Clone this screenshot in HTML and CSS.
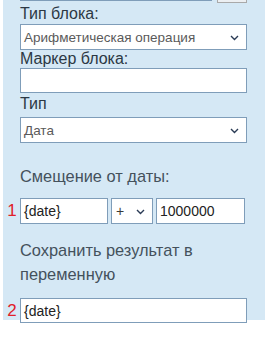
FILE: index.html
```html
<!DOCTYPE html>
<html lang="ru">
<head>
<meta charset="utf-8">
<link rel="stylesheet" href="styles.css">
</head>
<body>
<div class="panel">
  <div class="top-row">
    <div class="top-input"></div>
    <div class="top-btn"></div>
  </div>
  <div class="label label-first">Тип блока:</div>
  <div class="select select-wide"><span class="sel-text">Арифметическая операция</span><svg class="chev" width="9" height="6" viewBox="0 0 9 6"><path d="M1 1 L4.5 4.5 L8 1" fill="none" stroke="#2a3b55" stroke-width="1.4"/></svg></div>
  <div class="label label-marker">Маркер блока:</div>
  <div class="input input-wide"></div>
  <div class="label label-type">Тип</div>
  <div class="select select-wide"><span class="sel-text">Дата</span><svg class="chev" width="9" height="6" viewBox="0 0 9 6"><path d="M1 1 L4.5 4.5 L8 1" fill="none" stroke="#2a3b55" stroke-width="1.4"/></svg></div>
  <div class="label label-soft label-offset">Смещение от даты:</div>
  <div class="num-row">
    <span class="num">1</span>
    <div class="input input-date"><span class="val">{date}</span></div>
    <div class="select select-op"><span class="sel-text op">+</span><svg class="chev" width="9" height="6" viewBox="0 0 9 6"><path d="M1 1 L4.5 4.5 L8 1" fill="none" stroke="#2a3b55" stroke-width="1.4"/></svg></div>
    <div class="input input-amount"><span class="val">1000000</span></div>
  </div>
  <div class="label label-soft label-save">Сохранить результат в переменную</div>
  <div class="num-row num-row-2">
    <span class="num">2</span>
    <div class="input input-var"><span class="val">{date}</span></div>
  </div>
</div>
</body>
</html>
```
FILE: styles.css
```css
* { box-sizing: border-box; }
html, body { margin: 0; padding: 0; background: #ffffff; }
body {
  font-family: "Liberation Sans", Arial, sans-serif;
  width: 265px;
  height: 347px;
  overflow: hidden;
}
.panel {
  margin-left: 3px;
  background: #d5e8f5;
  padding: 0 18px 20px 17px;
  height: 342px;
}
.top-row {
  display: flex;
  gap: 5px;
  margin-top: -22px;
  height: 24px;
}
.top-input {
  width: 192px;
  height: 23px;
  background: #fff;
  border: 1px solid #7f9db9;
}
.top-btn {
  width: 30px;
  height: 25px;
  background: #eceff2;
  border: 1px solid #a9a9a9;
}
.label {
  font-size: 16px;
  color: #2c3844;
  line-height: 20px;
}
.label-first { margin-top: 0; height: 22px; padding-top: 2px; }
.label-marker { height: 18px; line-height: 18px; margin-top: 0; }
.label-type { height: 24px; line-height: 20px; padding-top: 1px; }
.label-soft { color: #44515c; line-height: 24px; font-size: 16.4px; }
.label-offset { margin-top: 21px; margin-bottom: 10px; }
.label-save { margin-top: 14px; margin-bottom: 12px; width: 205px; }
.select, .input {
  background: #fff;
  border: 1px solid #7f9db9;
  display: flex;
  align-items: center;
}
.select { height: 26px; padding: 0 7px 0 3px; justify-content: space-between; }
.input { height: 25px; padding: 0 3px; }
.select-wide, .input-wide { width: 227px; }
.sel-text { font-size: 13.5px; color: #5a5a5a; }
.sel-text.op { color: #3a3a3a; padding-left: 1px; font-size: 14px; }
.chev { display: block; margin-top: 1px; }
.num-row {
  display: flex;
  gap: 3px;
  margin-left: -13px;
  align-items: center;
}
.num {
  width: 10px;
  font-size: 17px;
  color: #e0202a;
  text-align: center;
}
.input-date { width: 88px; height: 26px; }
.select-op { width: 42px; height: 26px; }
.input-amount { width: 89px; height: 26px; }
.input-var { width: 227px; height: 25px; }
.val { font-size: 14px; color: #222; }
```
